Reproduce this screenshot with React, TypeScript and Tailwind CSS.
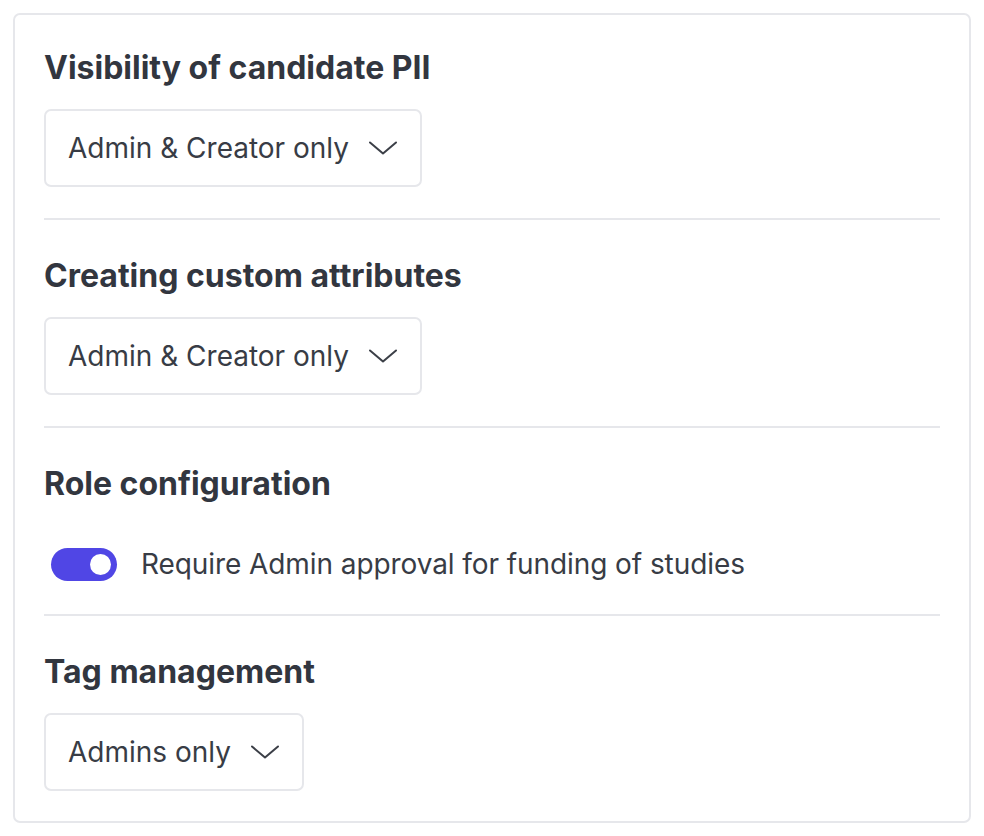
import React from "react";

function Chevron() {
  return (
    <svg width="28" height="14" viewBox="0 0 28 14" fill="none" className="shrink-0">
      <polyline points="1,1.5 14,12.5 27,1.5" stroke="#3b3f47" strokeWidth="2" strokeLinecap="round" strokeLinejoin="round" />
    </svg>
  );
}

function Select({ label }: { label: string }) {
  return (
    <div className="inline-flex h-[78px] items-center gap-[20px] self-start rounded-[7px] border-2 border-[#e6e7eb] bg-white pl-[22px] pr-[23px]">
      <span className="text-[28px] leading-[36px] text-[#383c45]">{label}</span>
      <Chevron />
    </div>
  );
}

function Heading({ children }: { children: React.ReactNode }) {
  return <h2 className="text-[32px] font-bold leading-[36px] text-[#32363f]">{children}</h2>;
}

export default function App() {
  return (
    <div className="min-h-screen bg-white p-[13px]" style={{ fontFamily: "Inter, 'Noto Sans', sans-serif" }}>
      <div className="flex flex-col rounded-[7px] border-2 border-[#e6e7eb] bg-white px-[29px]">
        <section className="flex flex-col pt-[35px] pb-[31px]">
          <Heading>Visibility of candidate PII</Heading>
          <div className="mt-[23px] flex">
            <Select label="Admin & Creator only" />
          </div>
        </section>
        <div className="h-[2px] bg-[#e6e7eb]" />
        <section className="flex flex-col pt-[38px] pb-[31px]">
          <Heading>Creating custom attributes</Heading>
          <div className="mt-[23px] flex">
            <Select label="Admin & Creator only" />
          </div>
        </section>
        <div className="h-[2px] bg-[#e6e7eb]" />
        <section className="flex flex-col pt-[38px] pb-[30px]">
          <Heading>Role configuration</Heading>
          <div className="mt-[42px] flex h-[40px] items-center pl-[7px]">
            <div className="relative h-[33px] w-[66px] shrink-0 rounded-full bg-[#5046e5]">
              <div className="absolute right-[6px] top-[6px] h-[21px] w-[21px] rounded-full bg-white" />
            </div>
            <span className="ml-[24px] text-[28px] leading-[36px] tracking-[-0.08px] text-[#383c45]">
              Require Admin approval for funding of studies
            </span>
          </div>
        </section>
        <div className="h-[2px] bg-[#e6e7eb]" />
        <section className="flex flex-col pt-[38px] pb-[30px]">
          <Heading>Tag management</Heading>
          <div className="mt-[23px] flex">
            <Select label="Admins only" />
          </div>
        </section>
      </div>
    </div>
  );
}
